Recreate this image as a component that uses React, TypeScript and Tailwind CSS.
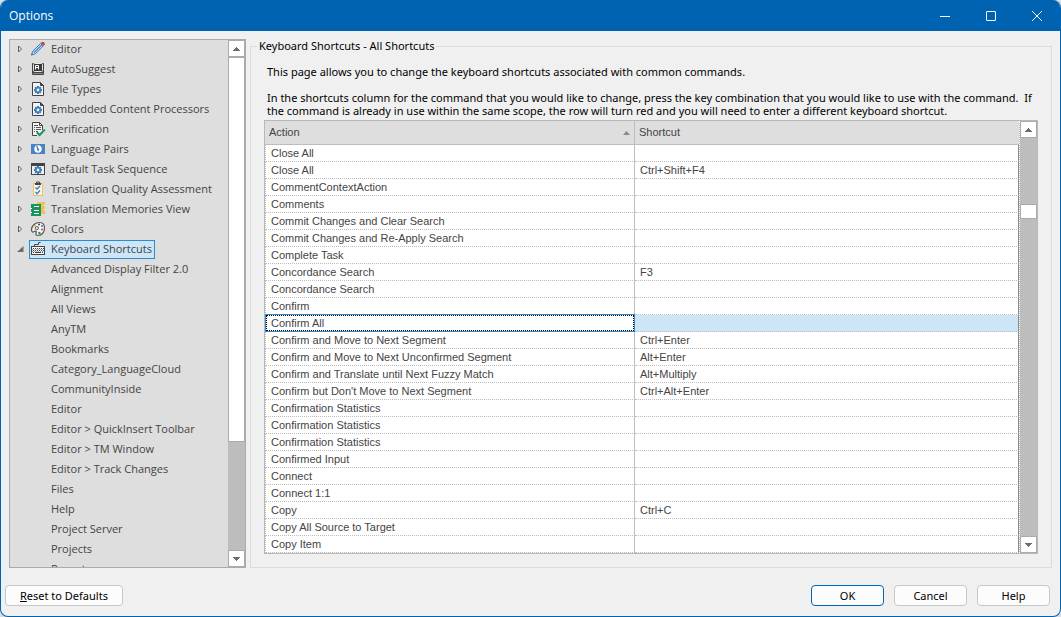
import React, { useState } from 'react';
import clsx from 'clsx';

interface TreeItem {
  label: string;
  icon: React.ReactNode;
}

interface ShortcutRow {
  action: string;
  shortcut?: string;
}

const Icon: React.FC<{ children: React.ReactNode }> = ({ children }) => (
  <svg viewBox="0 0 16 16" className="h-4 w-4 shrink-0 self-start" fill="none" aria-hidden="true">
    {children}
  </svg>
);

const GEAR_TEETH = [0, 45, 90, 135];

const Gear: React.FC<{ cx: number; cy: number }> = ({ cx, cy }) => (
  <g>
    {GEAR_TEETH.map((angle) => (
      <rect
        key={angle}
        x={cx - 1}
        y={cy - 4}
        width="2"
        height="8"
        fill="#3f7cc0"
        transform={`rotate(${angle} ${cx} ${cy})`}
      />
    ))}
    <circle cx={cx} cy={cy} r="3" fill="#3f7cc0" />
    <circle cx={cx} cy={cy} r="1.4" fill="#f4f4f4" />
  </g>
);

const PencilIcon = () => (
  <Icon>
    <path d="M1.5 14 2.8 10.2 10.6 2.4 13.2 5 5.4 12.8Z" fill="#c9dcf0" stroke="#3f7cc0" />
    <path d="M4 11.6 12 3.6" stroke="#3f7cc0" strokeWidth="1.2" />
    <path d="M1 14.6 1.8 12.2 3.4 13.8Z" fill="#3f7cc0" />
    <path d="M10.6 2 12 1Q13.2.4 14.2 1.4T14.8 3.6L13.6 5Z" fill="#c8463c" />
  </Icon>
);

const AutoSuggestIcon = () => (
  <Icon>
    <rect x="2" y="2" width="12" height="12" rx="1" fill="#444" />
    <rect x="3.5" y="2.5" width="9" height="8" rx="1" fill="#3a3a3a" stroke="#e6e6e6" />
    <path d="M5.5 8.5V4.5H8.5V8.5M5.5 6.5H8.5" stroke="#fff" />
    <path d="M3 12.5H13" stroke="#888" />
  </Icon>
);

const GearPageIcon = () => (
  <Icon>
    <path d="M2.5 1.5H10.5L13.5 4.5V14.5H2.5Z" fill="#f4f4f4" stroke="#444" />
    <path d="M10.5 1.5V4.5H13.5Z" fill="#444" stroke="#444" />
    <Gear cx={8} cy={9} />
  </Icon>
);

const VerificationIcon = () => (
  <Icon>
    <path d="M7 14.5H2.5V1.5H9.5L12.5 4.5V9" fill="#f4f4f4" stroke="#444" />
    <path d="M9.5 1.5V4.5H12.5" stroke="#444" />
    <path d="M4 4.5H8M4 6.5H5M6 6.5H11M4 8.5H5M6 8.5H11M4 10.5H5M6 10.5H8" stroke="#555" />
    <path d="M6.8 11.2 9.6 14 14.8 8.6" stroke="#17955a" strokeWidth="2" />
  </Icon>
);

const LanguageIcon = () => (
  <Icon>
    <rect x="1" y="3" width="14" height="10" fill="#4a82c3" />
    <circle cx="8" cy="8" r="3.7" fill="#fff" />
    <path d="M6 5.5 8 5.1 8 7.1 9.4 8.1 8.4 10.5 7 9.1 7 7.5Z" fill="#4a82c3" />
  </Icon>
);

const TaskSequenceIcon = () => (
  <Icon>
    <rect x="1.5" y="2.5" width="13" height="11" fill="#f0f0f0" stroke="#444" />
    <path d="M1 3.5H15" stroke="#444" strokeWidth="3" />
    <Gear cx={8} cy={9} />
  </Icon>
);

const QualityIcon = () => (
  <Icon>
    <rect x="3.5" y="2.5" width="9" height="12" fill="#f7f3e8" stroke="#edc15c" />
    <rect x="5" y="2" width="6" height="2" fill="#444" />
    <path d="M6.5 2V1H9.5V2" stroke="#444" />
    <path d="M5.5 6.5 7 8 10 5M5.5 11 7 12.8 10 9.5" stroke="#3f7cc0" strokeWidth="1.3" />
  </Icon>
);

const MemoriesIcon = () => (
  <Icon>
    <path d="M7 1H15V13H7Z" fill="#edc15c" />
    <path d="M14 4.5H15M14 8.5H15" stroke="#fff" />
    <rect x="1" y="3" width="10" height="12" fill="#17955a" />
    <path d="M4 5.5H9M4 9.5H9M4 12.5H9" stroke="#fff" />
    <path d="M1 7.5H2M1 11.5H2" stroke="#fff" />
  </Icon>
);

const PaletteIcon = () => (
  <Icon>
    <path
      d="M9.5 1.5C13 1.5 14.5 4 14.5 7 14.5 11 12 14.5 8 14.5 5.5 14.5 5.5 12.8 6.2 11.6 7 10.2 5 9.6 3.8 10.6 2.4 11.7 1.5 10.4 1.5 8.6 1.5 5 5 1.5 9.5 1.5Z"
      fill="#f4f4f4"
      stroke="#555"
      strokeWidth="1.2"
    />
    <circle cx="6.8" cy="7.2" r="1.6" stroke="#555" />
    <circle cx="5" cy="4.9" r="1" fill="#edb33c" />
    <circle cx="9" cy="3.6" r="1" fill="#444" />
    <circle cx="12" cy="5" r="1.1" fill="#3f7cc0" />
    <circle cx="12" cy="8.6" r="1.1" fill="#d9534a" />
    <circle cx="9.4" cy="12" r="1.2" fill="#17955a" />
  </Icon>
);

const KeyboardIcon = () => (
  <Icon>
    <path d="M4.5 5.5V3.5H8.5V1.5H10.5" stroke="#444" />
    <rect x="1.5" y="5.5" width="13" height="8" fill="#f4f4f4" stroke="#444" />
    <path d="M3 7.5H14M3 9.5H14" stroke="#444" strokeDasharray="1 1" />
    <path d="M2 8.5H14M2 10.5H14" stroke="#999" strokeDasharray="1 1" />
    <path d="M3 11.5H4M5 11.5H11M12 11.5H13" stroke="#444" />
  </Icon>
);

const TREE_ITEMS: TreeItem[] = [
  { label: 'Editor', icon: <PencilIcon /> },
  { label: 'AutoSuggest', icon: <AutoSuggestIcon /> },
  { label: 'File Types', icon: <GearPageIcon /> },
  { label: 'Embedded Content Processors', icon: <GearPageIcon /> },
  { label: 'Verification', icon: <VerificationIcon /> },
  { label: 'Language Pairs', icon: <LanguageIcon /> },
  { label: 'Default Task Sequence', icon: <TaskSequenceIcon /> },
  { label: 'Translation Quality Assessment', icon: <QualityIcon /> },
  { label: 'Translation Memories View', icon: <MemoriesIcon /> },
  { label: 'Colors', icon: <PaletteIcon /> },
  { label: 'Keyboard Shortcuts', icon: <KeyboardIcon /> },
];

const SHORTCUT_GROUPS = [
  'Advanced Display Filter 2.0',
  'Alignment',
  'All Views',
  'AnyTM',
  'Bookmarks',
  'Category_LanguageCloud',
  'CommunityInside',
  'Editor',
  'Editor > QuickInsert Toolbar',
  'Editor > TM Window',
  'Editor > Track Changes',
  'Files',
  'Help',
  'Project Server',
  'Projects',
  'Reports',
];

const ROWS: ShortcutRow[] = [
  { action: 'Close All' },
  { action: 'Close All', shortcut: 'Ctrl+Shift+F4' },
  { action: 'CommentContextAction' },
  { action: 'Comments' },
  { action: 'Commit Changes and Clear Search' },
  { action: 'Commit Changes and Re-Apply Search' },
  { action: 'Complete Task' },
  { action: 'Concordance Search', shortcut: 'F3' },
  { action: 'Concordance Search' },
  { action: 'Confirm' },
  { action: 'Confirm All' },
  { action: 'Confirm and Move to Next Segment', shortcut: 'Ctrl+Enter' },
  { action: 'Confirm and Move to Next Unconfirmed Segment', shortcut: 'Alt+Enter' },
  { action: 'Confirm and Translate until Next Fuzzy Match', shortcut: 'Alt+Multiply' },
  { action: "Confirm but Don't Move to Next Segment", shortcut: 'Ctrl+Alt+Enter' },
  { action: 'Confirmation Statistics' },
  { action: 'Confirmation Statistics' },
  { action: 'Confirmation Statistics' },
  { action: 'Confirmed Input' },
  { action: 'Connect' },
  { action: 'Connect 1:1' },
  { action: 'Copy', shortcut: 'Ctrl+C' },
  { action: 'Copy All Source to Target' },
  { action: 'Copy Item' },
];

const ScrollButton: React.FC<{ direction: 'up' | 'down' }> = ({ direction }) => (
  <button
    aria-label={direction === 'up' ? 'Scroll up' : 'Scroll down'}
    className="flex h-[17px] w-full shrink-0 items-center justify-center border border-[#ababab] bg-white"
  >
    <svg viewBox="0 0 7 4" className="h-1 w-[7px]" shapeRendering="crispEdges" fill="#6d6d6d">
      <path d={direction === 'up' ? 'M0 4 3.5 0 7 4Z' : 'M0 0H7L3.5 4Z'} />
    </svg>
  </button>
);

const DialogButton: React.FC<{ children: React.ReactNode; primary?: boolean }> = ({ children, primary }) => (
  <button
    className={clsx(
      'h-[21px] min-w-[73px] rounded border bg-[#fcfcfc] px-[14px] leading-[19px] text-black',
      primary ? 'border-[#0067b8]' : 'border-[#c8c8c8]'
    )}
  >
    {children}
  </button>
);

export default function App() {
  const [selectedItem, setSelectedItem] = useState('Keyboard Shortcuts');
  const [selectedRow, setSelectedRow] = useState(10);

  return (
    <div className="h-screen bg-[#d8dde2]">
      <div className="flex h-full flex-col overflow-hidden rounded-lg border border-t-0 border-[#0063b1] bg-[#f0f0f0] font-['Noto_Sans',sans-serif] text-[11px]">
        {/* Title bar */}
        <header className="flex h-[31px] shrink-0 items-center justify-between bg-[#0063b1] pl-2 text-white">
          <h1 className="font-['Open_Sans',sans-serif] text-xs">Options</h1>
          <div className="flex h-full">
            <button aria-label="Minimize" className="flex w-[46px] items-center justify-center">
              <svg viewBox="0 0 10 10" className="size-[10px]" stroke="#fff">
                <path d="M0 5.5H10" />
              </svg>
            </button>
            <button aria-label="Maximize" className="flex w-[46px] items-center justify-center">
              <svg viewBox="0 0 10 10" className="size-[10px]" stroke="#fff" fill="none">
                <rect x="0.5" y="0.5" width="9" height="9" rx="0.5" />
              </svg>
            </button>
            <button aria-label="Close" className="flex w-[46px] items-center justify-center">
              <svg viewBox="0 0 10 10" className="size-[10px]" stroke="#fff">
                <path d="M0 0 10 10M10 0 0 10" />
              </svg>
            </button>
          </div>
        </header>

        <main className="flex min-h-0 flex-1 gap-1 px-2 pt-2">
          {/* Category tree */}
          <nav className="flex w-[237px] shrink-0 border border-[#ababab] bg-[#dedede] font-['Open_Sans',sans-serif] text-[#444]">
            <ul className="min-w-0 flex-1 overflow-hidden">
              {TREE_ITEMS.map(({ label, icon }) => {
                const expanded = label === 'Keyboard Shortcuts';
                return (
                  <li key={label} className="flex h-5 items-start pl-[7px]">
                    <svg viewBox="0 0 7 19" className="mr-[5px] h-[19px] w-[7px] shrink-0">
                      {expanded ? (
                        <path d="M6.5 6V12H0Z" fill="#6d6d6d" />
                      ) : (
                        <path d="M1.5 6V12L4.5 9Z" fill="#f0f0f0" stroke="#5a5a5a" />
                      )}
                    </svg>
                    <button
                      onClick={() => setSelectedItem(label)}
                      className={clsx(
                        'flex h-[19px] gap-[5px] border pr-0.5 leading-4 whitespace-nowrap',
                        selectedItem === label ? 'border-[#2a8dd4] bg-[#cde6f7]' : 'border-transparent'
                      )}
                    >
                      {icon}
                      {label}
                    </button>
                  </li>
                );
              })}
              {SHORTCUT_GROUPS.map((label) => (
                <li key={label} className="flex h-5 items-start pl-10">
                  <button
                    onClick={() => setSelectedItem(label + '/group')}
                    className="flex h-[19px] border border-transparent leading-4 whitespace-nowrap"
                  >
                    {label}
                  </button>
                </li>
              ))}
            </ul>
            <div className="flex w-[17px] shrink-0 flex-col bg-[#bdbdbd]">
              <ScrollButton direction="up" />
              <div className="grow-[385] border border-[#ababab] bg-white" />
              <div className="grow-[109]" />
              <ScrollButton direction="down" />
            </div>
          </nav>

          {/* Settings page */}
          <fieldset className="min-w-0 flex-1 border border-[#dcdcdc] px-[13px] text-black">
            <legend className="-ml-[7px] px-0.5 leading-[14px]">Keyboard Shortcuts - All Shortcuts</legend>
            <p className="mt-3 mb-[13px] pl-[3px] leading-[13px]">
              This page allows you to change the keyboard shortcuts associated with common commands.
            </p>
            <p className="mb-[3px] pl-[3px] leading-[13px]">
              In the shortcuts column for the command that you would like to change, press the key combination that you
              would like to use with the command.&nbsp; If the command is already in use within the same scope, the row
              will turn red and you will need to enter a different keyboard shortcut.
            </p>

            <div className="flex border border-[#b8b8b8] bg-white font-['Liberation_Sans',sans-serif] text-[#444]">
              <table className="min-w-0 flex-1 table-fixed border-separate border-spacing-0 text-left">
                <colgroup>
                  <col className="w-[370px]" />
                  <col />
                </colgroup>
                <thead>
                  <tr className="h-6 bg-[#dedede]">
                    <th scope="col" className="border-r border-b border-[#bdbdbd] px-1 font-normal">
                      <div className="flex items-center justify-between">
                        Action
                        <svg viewBox="0 0 7 4" className="h-1 w-[7px]" fill="#8a8a8a">
                          <path d="M0 4 3.5 0 7 4Z" />
                        </svg>
                      </div>
                    </th>
                    <th scope="col" className="border-b border-[#bdbdbd] px-1 font-normal">
                      Shortcut
                    </th>
                  </tr>
                </thead>
                <tbody>
                  {ROWS.map(({ action, shortcut }, index) => {
                    const selected = index === selectedRow;
                    return (
                      <tr key={index} onClick={() => setSelectedRow(index)} className="leading-4">
                        <td className="relative h-[17px] border-r border-b border-l border-[#bdbdbd] p-0 pl-[5px] [border-bottom-style:dotted] [border-left-style:dotted]">
                          {action}
                          {selected && (
                            <span className="absolute -inset-px border border-[#2a8dd4] outline-1 -outline-offset-2 outline-black outline-dotted" />
                          )}
                        </td>
                        <td
                          className={clsx(
                            'h-[17px] border-r border-b border-r-[#8a8a8a] border-b-[#bdbdbd] p-0 pl-[5px] [border-bottom-style:dotted]',
                            selected && 'bg-[#cde6f7]'
                          )}
                        >
                          {shortcut}
                        </td>
                      </tr>
                    );
                  })}
                </tbody>
              </table>
              <div className="flex w-[18px] shrink-0 flex-col border-l border-dotted border-white bg-[#bdbdbd]">
                <ScrollButton direction="up" />
                <div className="grow-[66]" />
                <div className="h-[15px] border border-[#ababab] bg-white" />
                <div className="grow-[318]" />
                <ScrollButton direction="down" />
              </div>
            </div>
          </fieldset>
        </main>

        {/* Dialog buttons */}
        <footer className="flex shrink-0 items-center justify-between pt-[17px] pr-[10px] pb-[10px] pl-1">
          <DialogButton>
            <span className="underline">R</span>eset to Defaults
          </DialogButton>
          <div className="flex gap-[10px]">
            <DialogButton primary>OK</DialogButton>
            <DialogButton>Cancel</DialogButton>
            <DialogButton>Help</DialogButton>
          </div>
        </footer>
      </div>
    </div>
  );
}
